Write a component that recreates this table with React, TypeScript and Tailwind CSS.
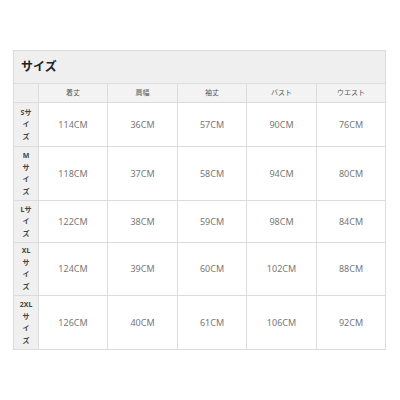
import React from 'react';

const cols = ['着丈', '肩幅', '袖丈', 'バスト', 'ウエスト'];

const rows = [
  { label: ['Sサ', 'イ', 'ズ'], h: 'h-[44px]', vals: ['114CM', '36CM', '57CM', '90CM', '76CM'] },
  { label: ['M', 'サ', 'イ', 'ズ'], h: 'h-[54px]', vals: ['118CM', '37CM', '58CM', '94CM', '80CM'] },
  { label: ['Lサ', 'イ', 'ズ'], h: 'h-[42px]', vals: ['122CM', '38CM', '59CM', '98CM', '84CM'] },
  { label: ['XL', 'サ', 'イ', 'ズ'], h: 'h-[53px]', vals: ['124CM', '39CM', '60CM', '102CM', '88CM'] },
  { label: ['2XL', 'サ', 'イ', 'ズ'], h: 'h-[54px]', vals: ['126CM', '40CM', '61CM', '106CM', '92CM'] },
];

export default function App() {
  return (
    <div className="w-[400px] h-[400px] bg-white pt-[50px] pl-[13px]" style={{ fontFamily: '"Noto Sans", "Noto Sans CJK JP", sans-serif' }}>
      <table className="border-collapse w-[372px] table-fixed">
        <colgroup>
          <col className="w-[25px]" />
          <col className="w-[69px]" />
          <col className="w-[70px]" />
          <col className="w-[69px]" />
          <col className="w-[70px]" />
          <col className="w-[69px]" />
        </colgroup>
        <tbody>
          <tr className="h-[33px]">
            <td colSpan={6} className="bg-[#efefef] border border-[#dcdcdc] pl-[7px] text-[12px] font-bold text-[#222] align-middle">
              サイズ
            </td>
          </tr>
          <tr className="h-[19px]">
            <td className="bg-[#f0f0f0] border border-[#dcdcdc]" />
            {cols.map(c => (
              <td key={c} className="bg-[#f3f3f3] border border-[#dcdcdc] text-center text-[7px] text-[#555] align-middle">
                {c}
              </td>
            ))}
          </tr>
          {rows.map(r => (
            <tr key={r.vals[0]} className={r.h}>
              <td className="bg-[#f0f0f0] border border-[#dcdcdc] text-center align-middle text-[7px] font-bold text-[#444] leading-[12px]">
                {r.label.map((l, i) => (
                  <div key={i}>{l}</div>
                ))}
              </td>
              {r.vals.map((v, i) => (
                <td key={i} className="bg-white border border-[#dcdcdc] text-center align-middle text-[9px] text-[#777]">
                  {v}
                </td>
              ))}
            </tr>
          ))}
        </tbody>
      </table>
    </div>
  );
}
